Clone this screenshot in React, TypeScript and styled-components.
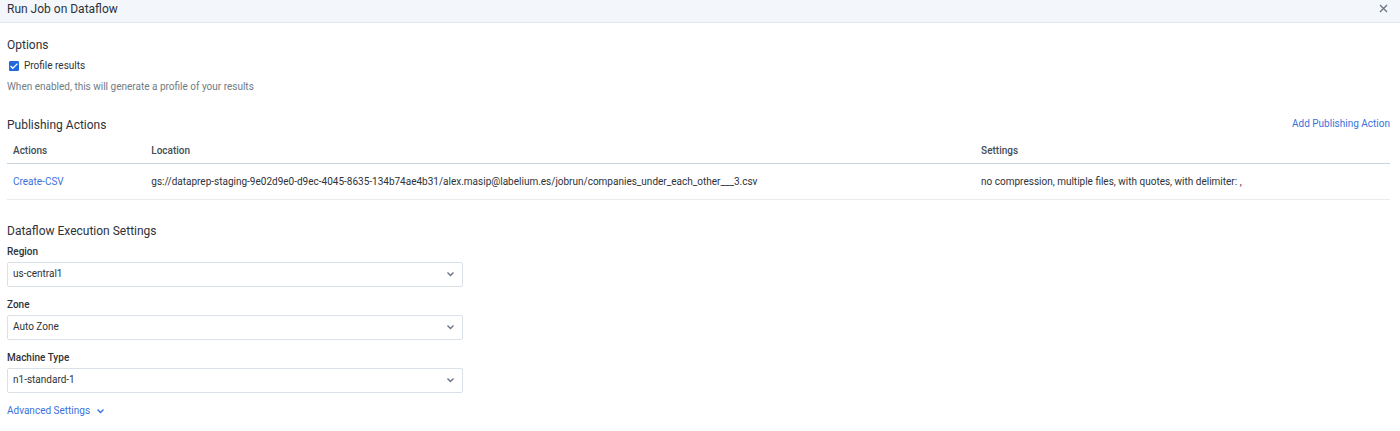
import React from "react";
import styled, { createGlobalStyle } from "styled-components";

const Global = createGlobalStyle`
  * { box-sizing: border-box; }
  body { margin: 0; background: #fff; color: #2d3238; font: 400 10px/16px Roboto, sans-serif; }
  button, input, select { font: inherit; color: inherit; }
`;
const Header = styled.header`
  display: flex; align-items: center; justify-content: space-between;
  height: 23px; padding: 0 12px 5px 7px;
  background: #f3f7fc; border-bottom: 1px solid #e1e7ee;
`;
const Title = styled.h1`margin: 0; font-size: 12px; line-height: 18px; font-weight: 400;`;
const Close = styled.button`
  display: flex; padding: 0; border: 0; background: none; cursor: pointer; color: #6b7480;
`;
const Main = styled.main`padding: 12px 10px 8px 7px;`;
const Section = styled.section`margin-bottom: 20px;`;
const SectionHead = styled.div`display: flex; align-items: flex-start; justify-content: space-between;`;
const Heading = styled.h2`margin: 0 0 2px; font-size: 12px; line-height: 20px; font-weight: 400;`;
const Check = styled.label`
  display: flex; align-items: center; gap: 5px; margin-top: 3px; padding-left: 2px; line-height: 16px;
`;
const Box = styled.input`
  appearance: none; width: 10px; height: 10px; margin: 0; border-radius: 1px; border: 1px solid #1f69dc;
  &:checked { background: #1f69dc; }
`;
const BoxWrap = styled.span`
  display: grid;
  > * { grid-area: 1 / 1; }
  svg { pointer-events: none; }
`;
const Hint = styled.p`margin: 4px 0 0; line-height: 17px; color: #6f7c85;`;
const Link = styled.a`color: #3a72dc; text-decoration: none; line-height: 18px;`;
const Table = styled.table`
  width: 100%; margin-bottom: 21px; border-collapse: separate; border-spacing: 0; table-layout: fixed;
  th, td { text-align: left; padding: 0 0 0 6px; }
  th { height: 27px; padding-top: 2px; font-weight: 500; color: #434b54; border-bottom: 1px solid #c9d6e2; }
  td { height: 36px; border-bottom: 1px solid #e9ebee; }
`;
const Field = styled.div`width: 33%; margin-bottom: 9px;`;
const Label = styled.label`display: block; margin-bottom: 1px; font-weight: 500; line-height: 18px;`;
const SelectWrap = styled.div`
  display: grid; align-items: center;
  > * { grid-area: 1 / 1; }
  svg { justify-self: end; margin-right: 8px; pointer-events: none; color: #6b7480; }
`;
const Select = styled.select`
  appearance: none; width: 100%; height: 25px; padding: 0 24px 1px 5px;
  border: 1px solid #d9e0e8; border-radius: 2px; background: #fff;
`;
const Advanced = styled.button`
  display: flex; align-items: center; gap: 6px; padding: 0; border: 0; background: none;
  color: #3a72dc; cursor: pointer; line-height: 18px;
`;
const Chevron = () => (
  <svg width="9" height="9" viewBox="0 0 9 9" fill="none" stroke="currentColor" strokeWidth="1.4" aria-hidden="true">
    <path d="M1.5 2.5l3 3 3-3" />
  </svg>
);
const fields = [
  { id: "region", label: "Region", value: "us-central1" },
  { id: "zone", label: "Zone", value: "Auto Zone" },
  { id: "machine", label: "Machine Type", value: "n1-standard-1" },
];

export default function App() {
  return (
    <>
      <Global />
      <Header>
        <Title>Run Job on Dataflow</Title>
        <Close aria-label="Close">
          <svg width="9" height="9" viewBox="0 0 9 9" fill="none" stroke="currentColor" strokeWidth="1.3">
            <path d="M1 1l7 7M8 1L1 8" />
          </svg>
        </Close>
      </Header>
      <Main>
        <Section>
          <Heading>Options</Heading>
          <Check>
            <BoxWrap>
              <Box type="checkbox" defaultChecked />
              <svg width="10" height="10" viewBox="0 0 10 10" fill="none" stroke="#fff" strokeWidth="1.3">
                <path d="M1.5 5l2.3 2.3L8.5 2.6" />
              </svg>
            </BoxWrap>
            Profile results
          </Check>
          <Hint>When enabled, this will generate a profile of your results</Hint>
        </Section>
        <section>
          <SectionHead>
            <Heading>Publishing Actions</Heading>
            <Link href="#add">Add Publishing Action</Link>
          </SectionHead>
          <Table>
            <colgroup>
              <col style={{ width: "10%" }} />
              <col style={{ width: "60%" }} />
              <col style={{ width: "30%" }} />
            </colgroup>
            <thead>
              <tr><th>Actions</th><th>Location</th><th>Settings</th></tr>
            </thead>
            <tbody>
              <tr>
                <td><Link href="#csv">Create-CSV</Link></td>
                <td>gs://dataprep-staging-9e02d9e0-d9ec-4045-8635-134b74ae4b31/alex.masip@labelium.es/jobrun/companies_under_each_other___3.csv</td>
                <td>no compression, multiple files, with quotes, with delimiter: ,</td>
              </tr>
            </tbody>
          </Table>
        </section>
        <section>
          <Heading>Dataflow Execution Settings</Heading>
          {fields.map((f) => (
            <Field key={f.id}>
              <Label htmlFor={f.id}>{f.label}</Label>
              <SelectWrap>
                <Select id={f.id}><option>{f.value}</option></Select>
                <Chevron />
              </SelectWrap>
            </Field>
          ))}
          <Advanced>Advanced Settings <Chevron /></Advanced>
        </section>
      </Main>
    </>
  );
}
